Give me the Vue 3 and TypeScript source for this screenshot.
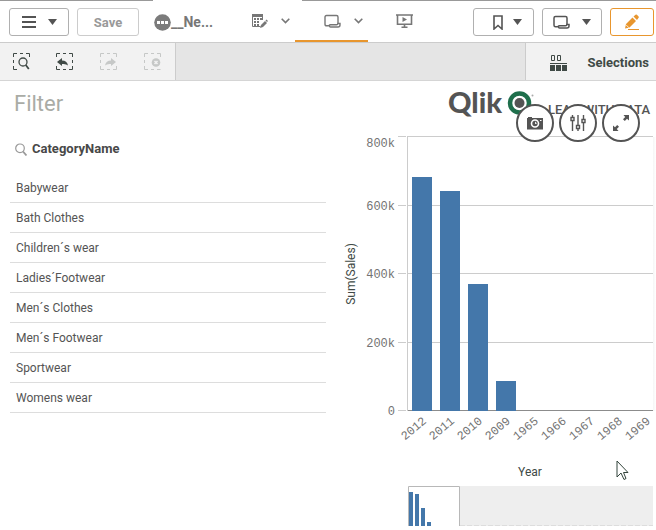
<script setup lang="ts">
interface YearValue {
  year: string
  top: number
}

const categories: string[] = [
  'Babywear',
  'Bath Clothes',
  'Children´s wear',
  'Ladies´Footwear',
  'Men´s Clothes',
  'Men´s Footwear',
  'Sportwear',
  'Womens wear',
]

const ticks = [
  { label: '800k', y: 56 },
  { label: '600k', y: 125 },
  { label: '400k', y: 193 },
  { label: '200k', y: 262 },
  { label: '0', y: 330 },
]

const baseline = 331
const years: YearValue[] = [
  { year: '2012', top: 97 },
  { year: '2011', top: 111 },
  { year: '2010', top: 204 },
  { year: '2009', top: 301 },
  { year: '1965', top: baseline },
  { year: '1966', top: baseline },
  { year: '1967', top: baseline },
  { year: '1968', top: baseline },
  { year: '1969', top: baseline },
]

const miniBars = [
  { x: 69, y: 412 },
  { x: 75, y: 414 },
  { x: 81, y: 428 },
  { x: 87, y: 442 },
]

const barX = (i: number): number => 72 + i * 28
const labelTransform = (i: number): string => `translate(${87 + i * 28} 342) rotate(-40)`
</script>

<template>
  <div class="app">
    <header class="toolbar">
      <span class="edge edge-left"></span>
      <span class="edge edge-right"></span>
      <div class="group">
        <button class="btn menu" aria-label="Menu">
          <svg width="14" height="12" viewBox="0 0 14 12"><path d="M0 1h14M0 6h14M0 11h14" stroke="#545454" stroke-width="2" /></svg>
          <svg width="9" height="6" viewBox="0 0 9 6"><path d="M0 0h9L4.500 6z" fill="#545454" /></svg>
        </button>
        <button class="btn save" disabled>Save</button>
        <button class="name" aria-label="App details">
          <svg width="17" height="17" viewBox="0 0 17 17"><circle cx="8.500" cy="8.500" r="8.300" fill="#7b7b7b" /><path d="M3 7h3v3H3zM7 7h3v3H7zM11 7h3v3h-3z" fill="#fff" /></svg>
          <span>__Ne...</span>
        </button>
      </div>
      <nav class="tabs">
        <button class="tab split" aria-label="Data">
          <svg width="17" height="16" viewBox="0 0 17 16">
            <path d="M1 1h11v3H1z" fill="#777" />
            <path d="M1.500 1v12.500h8M11.500 1v6" fill="none" stroke="#777" />
            <path d="M3 5h2v2H3zM6 5h2v2H6zM9 5h2v2H9zM3 8h2v2H3zM6 8h2v2H6zM3 11h2v2H3zM6 11h2v2H6z" fill="#777" />
            <path d="M9 15l1-3 4-4 2 2-4 4zM14.500 7.500l1-1 1.500 1.500-1 1z" fill="#777" />
          </svg>
          <svg width="9" height="6" viewBox="0 0 9 6"><path d="M.7.7L4.500 4.500 8.300.7" fill="none" stroke="#777" stroke-width="1.600" /></svg>
        </button>
        <button class="tab split active" aria-label="Sheet">
          <svg width="17" height="14" viewBox="0 0 17 14"><path d="M5.500 11.800H2.500Q1 11.800 1 10.300V3Q1 1.500 2.500 1.500h10Q14 1.500 14 3V9.500M5.500 10.500v1.500q0 1 1 1h7.500q2 0 2-2V9.500h-2.200q0 1.300-1.300 1.300H5.500" fill="none" stroke="#777" stroke-width="1.400" /></svg>
          <svg width="9" height="6" viewBox="0 0 9 6"><path d="M.7.7L4.500 4.500 8.300.7" fill="none" stroke="#777" stroke-width="1.600" /></svg>
        </button>
        <button class="tab" aria-label="Storytelling">
          <svg width="17" height="14" viewBox="0 0 17 14"><path d="M0 1h17M1.500 1v9.200h14V1M8.500 10v3M5.500 13.200h6" fill="none" stroke="#777" stroke-width="1.600" /><path d="M6.500 3v5L11 5.500z" fill="#777" /></svg>
        </button>
      </nav>
      <div class="group">
        <button class="btn bookmark" aria-label="Bookmarks">
          <svg width="10" height="15" viewBox="0 0 10 15"><path d="M1 1h8v13L5 10.500l-4 3.500z" fill="none" stroke="#545454" stroke-width="1.600" /></svg>
          <svg width="9" height="6" viewBox="0 0 9 6"><path d="M0 0h9L4.500 6z" fill="#545454" /></svg>
        </button>
        <button class="btn menu" aria-label="Sheets">
          <svg width="17" height="14" viewBox="0 0 17 14"><path d="M5.500 11.800H2.500Q1 11.800 1 10.300V3Q1 1.500 2.500 1.500h10Q14 1.500 14 3V9.500M5.500 10.500v1.500q0 1 1 1h7.500q2 0 2-2V9.500h-2.200q0 1.300-1.300 1.300H5.500" fill="none" stroke="#545454" stroke-width="1.500" /></svg>
          <svg width="9" height="6" viewBox="0 0 9 6"><path d="M0 0h9L4.500 6z" fill="#545454" /></svg>
        </button>
        <button class="btn edit" aria-label="Edit">
          <svg width="16" height="17" viewBox="0 0 16 17"><path d="M1 14.500l1-4.500 6.500-6.500 3.500 3.500L5.500 13.500zM9.500 2.500L11.500.7q.7-.5 1.400 0l1.700 1.700q.6.700 0 1.400L13 5.900z" fill="#e8962e" /><path d="M2 10.800l3 3" stroke="#fff" stroke-width=".8" /><path d="M4 15.500h11" stroke="#e8962e" /></svg>
        </button>
      </div>
    </header>

    <div class="selections">
      <div class="tools">
        <button aria-label="Smart search">
          <svg width="17" height="17" viewBox="0 0 17 17" fill="none" stroke="#404a46"><path d="M.5 4V.5H4M7 .5h3M13 .5h3.500V4M.5 7v3M.5 13v3.500H4" /><circle cx="10" cy="9" r="4" stroke-width="1.300" /><path d="M12.800 12l3 4" stroke-width="1.800" /></svg>
        </button>
        <button aria-label="Step back">
          <svg width="17" height="17" viewBox="0 0 17 17" fill="none" stroke="#404a46"><path d="M.5 4V.5H4M7 .5h3M13 .5h3.500V4M.5 13v3.500H4M7 16.500h3M13 16.500h3.500V13M16.500 7v3" /><path d="M1 9l5-4v2.500q5 0 6 5-2-2-6-1.500v2z" fill="#404a46" stroke="none" /></svg>
        </button>
        <button aria-label="Step forward" disabled>
          <svg width="17" height="17" viewBox="0 0 17 17" fill="none" stroke="#c6c8c7"><path d="M.5 4V.5H4M7 .5h3M13 .5h3.500V4M.5 7v3M.5 13v3.500H4M7 16.500h3M13 16.500h3.500V13" /><path d="M16 9l-5-4v2.500q-5 0-6 5 2-2 6-1.500v2z" fill="#c6c8c7" stroke="none" /></svg>
        </button>
        <button aria-label="Clear all selections" disabled>
          <svg width="17" height="17" viewBox="0 0 17 17" fill="none" stroke="#c6c8c7"><path d="M.5 4V.5H4M7 .5h3M13 .5h3.500V4M.5 7v3M.5 13v3.500H4M7 16.500h3M13 16.500h3.500" /><circle cx="12" cy="9.500" r="4.300" fill="#c6c8c7" stroke="none" /><path d="M10.500 8l3 3m0-3l-3 3" stroke="#f2f2f2" stroke-width="1.500" /></svg>
        </button>
      </div>
      <button class="selections-tool">
        <svg width="17" height="16" viewBox="0 0 17 16"><path d="M1.500.5h3v5h-3zM7.500.5h3v5h-3z" fill="none" stroke="#404a46" /><path d="M0 8h17v1H0zM0 10h5v6H0zM6 10h5v6H6zM12 10h5v6h-5z" fill="#404a46" /></svg>
        <span>Selections</span>
      </button>
    </div>

    <main class="sheet">
      <section class="filter">
        <h1>Filter</h1>
        <h2>
          <svg width="12" height="13" viewBox="0 0 12 13"><circle cx="5" cy="5.300" r="4.300" fill="none" stroke="#999" stroke-width="1.200" /><path d="M8 8.500l3.500 4" stroke="#999" stroke-width="1.800" /></svg>
          CategoryName
        </h2>
        <ul>
          <li v-for="c in categories" :key="c"><button>{{ c }}</button></li>
        </ul>
      </section>

      <section class="chart">
        <svg class="plot" viewBox="0 1 316 445" role="img" aria-label="Sum(Sales) by Year">
          <defs>
            <linearGradient id="fade"><stop offset="0" stop-color="#f5f5f5" /><stop offset="1" stop-color="#fff" /></linearGradient>
          </defs>
          <g>
            <text x="108" y="33" class="brand">Qlik</text>
            <circle cx="179.500" cy="23" r="9.500" fill="#fff" stroke="#1f6f4c" stroke-width="4.500" />
            <circle cx="179.500" cy="23" r="5" fill="#545454" />
            <path d="M185 29l5 5" stroke="#1f6f4c" stroke-width="4" />
            <text x="208" y="34" class="tagline">LEAD WITH DATA</text>
            <circle cx="192.500" cy="15.500" r="1" fill="#aaa" />
          </g>
          <rect x="313" y="57" width="3" height="274" fill="url(#fade)" />
          <g v-for="t in ticks" :key="t.label">
            <rect x="58" :y="t.y" width="8" height="1" fill="#ccc" />
            <rect x="68" :y="t.y" width="245" height="1" :fill="t.label === '0' ? '#8c8c8c' : '#ccc'" />
            <text x="55" :y="t.label === '800k' ? 67 : t.y + 5" class="tick" text-anchor="end">{{ t.label }}</text>
          </g>
          <rect x="67" y="56" width="1" height="275" fill="#ccc" />
          <g v-for="(y, i) in years" :key="y.year">
            <rect :x="barX(i)" :y="y.top" width="20" :height="baseline - y.top" fill="#4477aa" />
            <text class="tick" text-anchor="end" :transform="labelTransform(i)">{{ y.year }}</text>
          </g>
          <text class="axis" text-anchor="middle" transform="translate(15 194) rotate(-90)">Sum(Sales)</text>
          <text class="axis" text-anchor="middle" x="190" y="396">Year</text>
          <rect x="120" y="406" width="193" height="40" fill="#eee" />
          <path d="M120 445.500h193" stroke="#ddd" stroke-dasharray="5 2" />
          <path d="M68.500 447v-40.500h51v40.500" fill="#fff" stroke="#b8b8b8" />
          <rect v-for="b in miniBars" :key="b.x" :x="b.x" :y="b.y" width="4" :height="446 - b.y" fill="#4477aa" />
        </svg>
        <div class="actions">
          <button aria-label="Take snapshot">
            <svg width="16" height="14" viewBox="0 0 16 14"><path d="M0 2h1V1h4v1h11v11.500H0z" fill="#545454" /><circle cx="8" cy="7.500" r="3.500" fill="#545454" stroke="#fff" stroke-width="1.600" /><path d="M8 5.500l2 2-2 .5z" fill="#fff" /><path d="M13 4h1.500v1H13z" fill="#fff" /></svg>
          </button>
          <button aria-label="Exploration menu">
            <svg width="16" height="16" viewBox="0 0 16 16" fill="none" stroke="#545454" stroke-width="1.400"><path d="M2.500 0v2M2.500 6v10M8 0v10M8 14v2M13.500 0v4M13.500 8v8" /><path d="M1 2.500h3v3H1zM6.500 10.500h3v3h-3zM12 4.500h3v3h-3z" /></svg>
          </button>
          <button aria-label="Full screen">
            <svg width="16" height="16" viewBox="0 0 16 16"><path d="M10.500 0H16v5.500l-2-1.700-2.200 2.200-1.800-1.800L12.200 2zM5.500 16H0v-5.500l2 1.700L4.200 10 6 11.800 3.800 14z" fill="#545454" /></svg>
          </button>
        </div>
        <svg class="cursor" width="13" height="21" viewBox="0 0 13 21"><path d="M1 1v16l4-4 3 6.500 2-1-2.500-6H12z" fill="#fff" stroke="#33443c" /></svg>
      </section>
    </main>
  </div>
</template>

<style>
body {
  margin: 0;
  background: #fff;
}
</style>

<style scoped>
.app {
  font-family: Roboto, 'Liberation Sans', sans-serif;
  color: #545454;
  overflow: hidden;
}
button {
  font: inherit;
  color: inherit;
  background: none;
  border: 0;
  padding: 0;
  margin: 0;
}
svg {
  display: block;
  flex: none;
}
.toolbar {
  position: relative;
  display: flex;
  height: 42px;
  padding: 0 2px 0 9px;
  border-bottom: 1px solid #ccc;
}
.edge {
  position: absolute;
  top: 0;
  height: 1px;
  background: #999;
}
.edge-left {
  left: 0;
  width: 153px;
}
.edge-right {
  left: 302px;
  right: 0;
}
.group {
  display: flex;
  align-items: center;
  gap: 8px;
  padding-top: 2px;
}
.btn {
  display: flex;
  align-items: center;
  justify-content: center;
  box-sizing: border-box;
  height: 28px;
  gap: 12px;
  background: #fff;
  border: 1px solid #b0b0b0;
  border-radius: 3px;
}
.menu {
  width: 60px;
}
.save {
  width: 62px;
  border-color: #ccc;
  color: #999;
  font-size: 13px;
  font-weight: 700;
}
.bookmark {
  width: 61px;
  gap: 10px;
  padding-left: 8px;
}
.edit {
  width: 44px;
  border-color: #e8962e;
}
.name {
  display: flex;
  align-items: center;
  width: 68px;
  margin-left: 7px;
  color: #777;
  font-size: 14px;
  font-weight: 700;
}
.tabs {
  display: flex;
  margin-right: auto;
}
.tab {
  display: flex;
  align-items: center;
  justify-content: center;
  box-sizing: border-box;
  width: 73px;
  gap: 13px;
  padding-top: 2px;
  border-bottom: 2px solid transparent;
}
.split {
  padding-left: 24px;
}
.active {
  border-color: #e8962e;
}
.selections {
  display: flex;
  justify-content: space-between;
  height: 37px;
  background: #e5e5e5;
  border-bottom: 1px solid #d5d5d5;
}
.tools {
  display: flex;
  width: 175px;
  background: #f2f2f2;
  border-right: 1px solid #ccc;
}
.tools button {
  display: flex;
  align-items: center;
  justify-content: center;
  width: 44px;
}
.tools button:first-child {
  width: 42px;
}
.selections-tool {
  display: flex;
  align-items: center;
  gap: 21px;
  padding: 2px 7px 0 24px;
  background: #f2f2f2;
  border-left: 1px solid #ccc;
  color: #404a46;
  font-size: 13px;
  font-weight: 700;
}
.sheet {
  display: grid;
  grid-template-columns: 340fr 316fr;
}
.filter {
  padding: 8px 14px 0 10px;
}
h1 {
  margin: 0;
  padding-left: 4px;
  font-size: 22px;
  line-height: 30px;
  font-weight: 400;
  color: #aaaca6;
}
h2 {
  display: flex;
  align-items: center;
  gap: 5px;
  margin: 20px 0 14px;
  padding-left: 5px;
  font-size: 13px;
  line-height: 20px;
  font-weight: 700;
  color: #484848;
}
ul {
  list-style: none;
  margin: 0;
  padding: 0;
}
li {
  border-bottom: 1px solid #ddd;
}
li button {
  display: block;
  width: 100%;
  padding: 1px 0 0 6px;
  font-size: 12px;
  line-height: 28px;
  text-align: left;
}
.chart {
  position: relative;
}
.plot {
  width: 100%;
}
.brand {
  font: 900 29px Lato, sans-serif;
  fill: #545454;
}
.tagline {
  font-size: 13px;
  font-weight: 500;
  fill: #545454;
}
.tick {
  font: 12px 'Liberation Mono', monospace;
  fill: #737373;
}
.axis {
  font-size: 12px;
  fill: #404a46;
}
.actions {
  position: absolute;
  top: 23px;
  right: 16px;
  display: flex;
  gap: 5px;
}
.actions button {
  display: flex;
  align-items: center;
  justify-content: center;
  box-sizing: border-box;
  width: 38px;
  height: 38px;
  background: #fff;
  border: 2px solid #545454;
  border-radius: 50%;
}
.cursor {
  position: absolute;
  left: 276px;
  top: 379px;
}
</style>
